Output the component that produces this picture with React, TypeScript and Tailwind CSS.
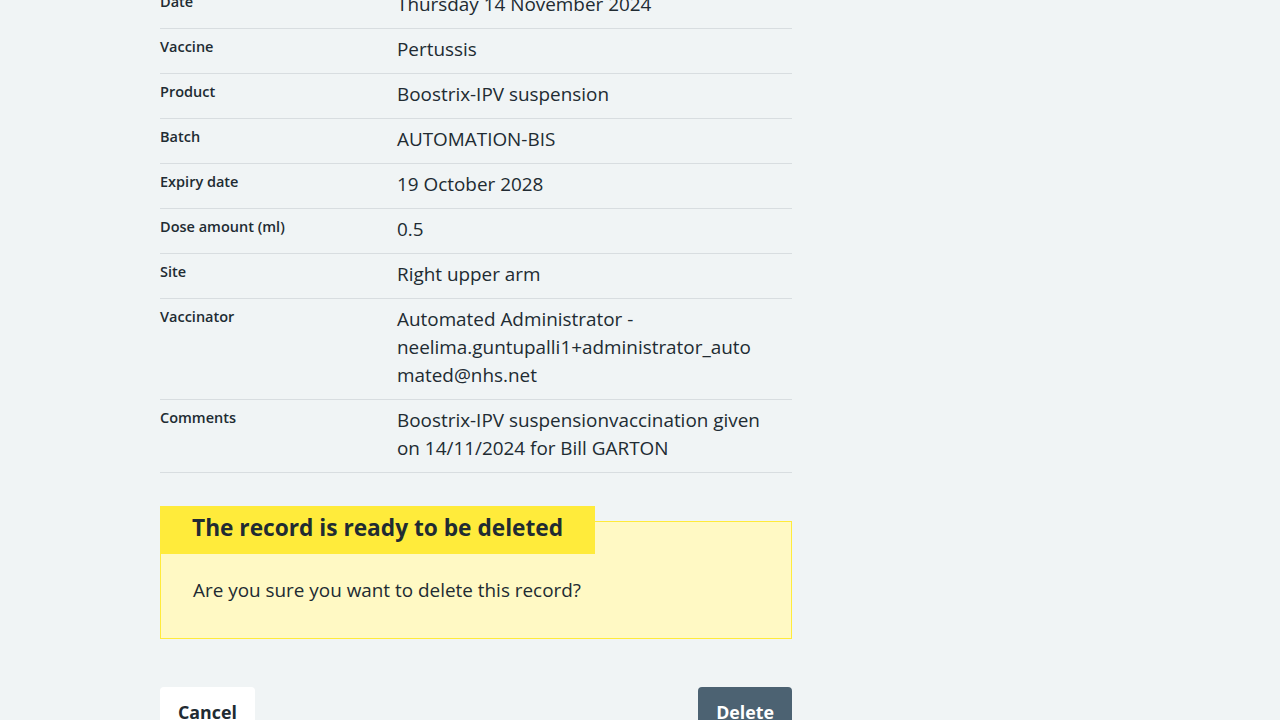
import React from "react";

const rows: { k: string; v: React.ReactNode }[] = [
  { k: "Date", v: "Thursday 14 November 2024" },
  { k: "Vaccine", v: "Pertussis" },
  { k: "Product", v: "Boostrix-IPV suspension" },
  { k: "Batch", v: "AUTOMATION-BIS" },
  { k: "Expiry date", v: "19 October 2028" },
  { k: "Dose amount (ml)", v: "0.5" },
  { k: "Site", v: "Right upper arm" },
  {
    k: "Vaccinator",
    v: (
      <>
        Automated Administrator -<br />
        neelima.guntupalli1+administrator_auto
        <br />
        mated@nhs.net
      </>
    ),
  },
  {
    k: "Comments",
    v: (
      <>
        Boostrix-IPV suspensionvaccination given
        <br />
        on 14/11/2024 for Bill GARTON
      </>
    ),
  },
];

export default function App() {
  return (
    <div className="min-h-[720px] w-full overflow-hidden bg-[#f0f4f5] text-[#212b32] font-['Open_Sans',sans-serif]">
      <div className="ml-[160px] w-[632px] mt-[-16px]">
        <dl>
          {rows.map((r) => (
            <div key={r.k} className="flex border-b border-[#d8dde0]">
              <dt className="w-[237px] shrink-0 pt-[8px] pb-[8px] text-[14.5px] leading-[20px] font-semibold">
                {r.k}
              </dt>
              <dd className="flex-1 pt-[6px] pb-[10px] text-[18.9px] leading-[28px] whitespace-nowrap">
                {r.v}
              </dd>
            </div>
          ))}
        </dl>
        <div className="mt-[48px] border border-[#ffeb3b] bg-[#fff9c4] px-[32px] pb-[32px]">
          <h3 className="relative top-[-16px] ml-[-33px] mb-[8px] inline-block bg-[#ffeb3b] px-[32px] pt-[6px] pb-[10px] text-[22.7px] leading-[32px] font-bold">
            The record is ready to be deleted
          </h3>
          <p className="mt-[-2px] mb-[2px] text-[18.9px] leading-[28px]">
            Are you sure you want to delete this record?
          </p>
        </div>
        <div className="mt-[48px] flex justify-between">
          <button className="rounded-[4px] bg-white px-[18px] pt-[11px] pb-[17px] text-[17.8px] leading-[28px] font-bold text-[#212b32] shadow-[0_4px_0_#d8dde0]">
            Cancel
          </button>
          <button className="rounded-[4px] bg-[#4c6272] px-[18px] pt-[11px] pb-[17px] text-[17.8px] leading-[28px] font-bold text-white shadow-[0_4px_0_#263139]">
            Delete
          </button>
        </div>
      </div>
    </div>
  );
}
